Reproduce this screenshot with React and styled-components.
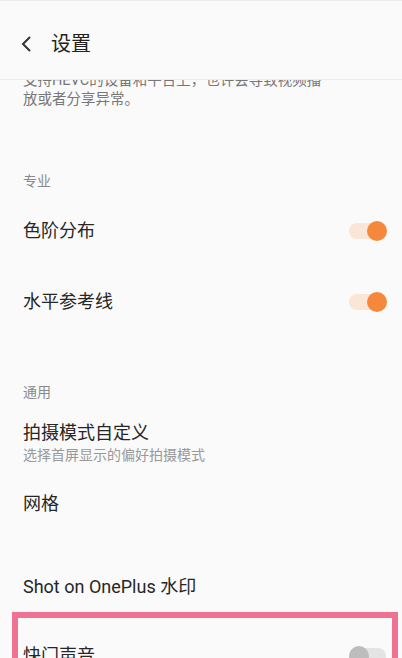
import React from 'react';
import styled, { createGlobalStyle } from 'styled-components';

const GlobalStyle = createGlobalStyle`
  html, body {
    margin: 0;
    padding: 0;
    background: #fafafa;
  }
  body {
    font-family: Roboto, "Noto Sans CJK SC", sans-serif;
    color: #262626;
  }
`;

const Screen = styled.div`
  width: 402px;
  height: 658px;
  overflow: hidden;
  background: #fafafa;
  border-top: 1px solid #ececec;
  box-sizing: border-box;
`;

const Header = styled.div`
  position: relative;
  z-index: 1;
  height: 79px;
  display: flex;
  align-items: center;
  padding: 8px 0 0 20px;
  gap: 17px;
  background: #fafafa;
  border-bottom: 1px solid #ececec;
  box-sizing: border-box;
`;

const Title = styled.div`
  font-size: 20px;
  line-height: 28px;
  color: #222;
`;

const Content = styled.div`
  margin-top: -9px;
`;

const Description = styled.div`
  padding: 0 23px 17px;
  font-size: 14.5px;
  line-height: 19px;
  color: #777;
`;

const Category = styled.div`
  padding: 45px 23px 4px;
  font-size: 14px;
  line-height: 20px;
  color: #8a8a8a;
`;

const Row = styled.div`
  height: ${(p) => p.$h || 71}px;
  display: flex;
  align-items: center;
  justify-content: space-between;
  padding: 0 ${(p) => p.$right ?? 15}px 0 ${(p) => p.$left ?? 23}px;
`;

const Texts = styled.div`
  display: flex;
  flex-direction: column;
`;

const Label = styled.div`
  font-size: 18px;
  line-height: 24px;
  color: #262626;
`;

const Sub = styled.div`
  font-size: 14px;
  line-height: 20px;
  color: #999;
`;

const Gap = styled.div`
  height: ${(p) => p.$h}px;
`;

const Highlight = styled.div`
  margin: 0 4px 0 12px;
  border: 6px solid #f07292;
  border-bottom: none;
`;

const Track = styled.div`
  position: relative;
  width: 37px;
  height: 16px;
  border-radius: 8px;
  margin-right: 1px;
  background: ${(p) => (p.$on ? '#fbe5d6' : '#e4e4e4')};
`;

const Knob = styled.div`
  position: absolute;
  top: -2px;
  ${(p) => (p.$on ? 'right: -1px;' : 'left: 0;')}
  width: 20px;
  height: 20px;
  border-radius: 50%;
  background: ${(p) => (p.$on ? '#f5883b' : '#bdbdbd')};
`;

const Toggle = ({ on }) => (
  <Track $on={on}>
    <Knob $on={on} />
  </Track>
);

const BackIcon = () => (
  <svg width="14" height="18" viewBox="0 0 14 18">
    <path d="M10 2 L3 9 L10 16" fill="none" stroke="#333" strokeWidth="2" />
  </svg>
);

export default function App() {
  return (
    <>
      <GlobalStyle />
      <Screen>
        <Header>
          <BackIcon />
          <Title>设置</Title>
        </Header>
        <Content>
          <Description>
            支持HEVC的设备和平台上，也许会导致视频播
            <br />
            放或者分享异常。
          </Description>

          <Category>专业</Category>
          <Row>
            <Label>色阶分布</Label>
            <Toggle on />
          </Row>
          <Row>
            <Label>水平参考线</Label>
            <Toggle on />
          </Row>

          <Category>通用</Category>
          <Row $h={74}>
            <Texts>
              <Label>拍摄模式自定义</Label>
              <Sub>选择首屏显示的偏好拍摄模式</Sub>
            </Texts>
          </Row>
          <Row $h={48}>
            <Label>网格</Label>
          </Row>
          <Gap $h={34} />
          <Row $h={50}>
            <Label>Shot on OnePlus 水印</Label>
          </Row>

          <Highlight>
            <Row $h={76} $left={5} $right={5}>
              <Label>快门声音</Label>
              <Toggle />
            </Row>
          </Highlight>
        </Content>
      </Screen>
    </>
  );
}
